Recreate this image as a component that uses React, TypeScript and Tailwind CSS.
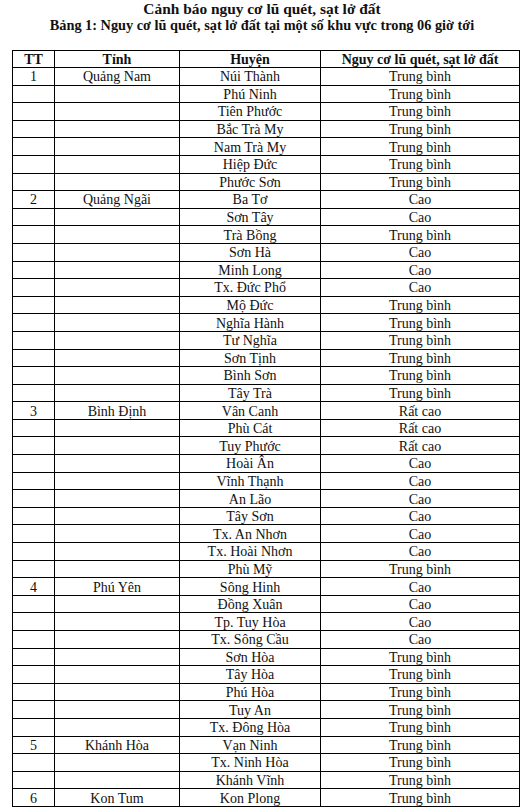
const rows: [string, string, string, string][] = [
  ['1', 'Quảng Nam', 'Núi Thành', 'Trung bình'],
  ['', '', 'Phú Ninh', 'Trung bình'],
  ['', '', 'Tiên Phước', 'Trung bình'],
  ['', '', 'Bắc Trà My', 'Trung bình'],
  ['', '', 'Nam Trà My', 'Trung bình'],
  ['', '', 'Hiệp Đức', 'Trung bình'],
  ['', '', 'Phước Sơn', 'Trung bình'],
  ['2', 'Quảng Ngãi', 'Ba Tơ', 'Cao'],
  ['', '', 'Sơn Tây', 'Cao'],
  ['', '', 'Trà Bồng', 'Trung bình'],
  ['', '', 'Sơn Hà', 'Cao'],
  ['', '', 'Minh Long', 'Cao'],
  ['', '', 'Tx. Đức Phổ', 'Cao'],
  ['', '', 'Mộ Đức', 'Trung bình'],
  ['', '', 'Nghĩa Hành', 'Trung bình'],
  ['', '', 'Tư Nghĩa', 'Trung bình'],
  ['', '', 'Sơn Tịnh', 'Trung bình'],
  ['', '', 'Bình Sơn', 'Trung bình'],
  ['', '', 'Tây Trà', 'Trung bình'],
  ['3', 'Bình Định', 'Vân Canh', 'Rất cao'],
  ['', '', 'Phù Cát', 'Rất cao'],
  ['', '', 'Tuy Phước', 'Rất cao'],
  ['', '', 'Hoài Ân', 'Cao'],
  ['', '', 'Vĩnh Thạnh', 'Cao'],
  ['', '', 'An Lão', 'Cao'],
  ['', '', 'Tây Sơn', 'Cao'],
  ['', '', 'Tx. An Nhơn', 'Cao'],
  ['', '', 'Tx. Hoài Nhơn', 'Cao'],
  ['', '', 'Phù Mỹ', 'Trung bình'],
  ['4', 'Phú Yên', 'Sông Hinh', 'Cao'],
  ['', '', 'Đồng Xuân', 'Cao'],
  ['', '', 'Tp. Tuy Hòa', 'Cao'],
  ['', '', 'Tx. Sông Cầu', 'Cao'],
  ['', '', 'Sơn Hòa', 'Trung bình'],
  ['', '', 'Tây Hòa', 'Trung bình'],
  ['', '', 'Phú Hòa', 'Trung bình'],
  ['', '', 'Tuy An', 'Trung bình'],
  ['', '', 'Tx. Đông Hòa', 'Trung bình'],
  ['5', 'Khánh Hòa', 'Vạn Ninh', 'Trung bình'],
  ['', '', 'Tx. Ninh Hòa', 'Trung bình'],
  ['', '', 'Khánh Vĩnh', 'Trung bình'],
  ['6', 'Kon Tum', 'Kon Plong', 'Trung bình'],
]

export default function App() {
  return (
    <div className="min-h-screen w-full bg-white text-[#111] font-['Liberation_Serif','Times_New_Roman',serif]">
      <div className="text-center font-bold">
        <h1 className="text-[15.4px] leading-[17px]">
          Cảnh báo nguy cơ lũ quét, sạt lở đất
        </h1>
        <h2 className="text-[14.3px] leading-[16px]">
          Bảng 1: Nguy cơ lũ quét, sạt lở đất tại một số khu vực trong 06 giờ tới
        </h2>
      </div>

      <table className="mt-[17px] ml-[12px] w-[507px] table-fixed border-collapse text-center text-[14px] leading-[15px]">
        <colgroup>
          <col className="w-[42px]" />
          <col className="w-[125px]" />
          <col className="w-[141px]" />
          <col className="w-[199px]" />
        </colgroup>
        <thead>
          <tr className="h-[17px] font-bold">
            <th className="border border-black p-0">TT</th>
            <th className="border border-black p-0">Tỉnh</th>
            <th className="border border-black p-0">Huyện</th>
            <th className="border border-black p-0">Nguy cơ lũ quét, sạt lở đất</th>
          </tr>
        </thead>
        <tbody>
          {rows.map((r, i) => (
            <tr key={i} className="h-[17.6px]">
              <td className="border border-black p-0 pt-[1px]">{r[0]}</td>
              <td className="border border-black p-0 pt-[1px]">{r[1]}</td>
              <td className="border border-black p-0 pt-[1px]">{r[2]}</td>
              <td className="border border-black p-0 pt-[1px]">{r[3]}</td>
            </tr>
          ))}
        </tbody>
      </table>
    </div>
  )
}
